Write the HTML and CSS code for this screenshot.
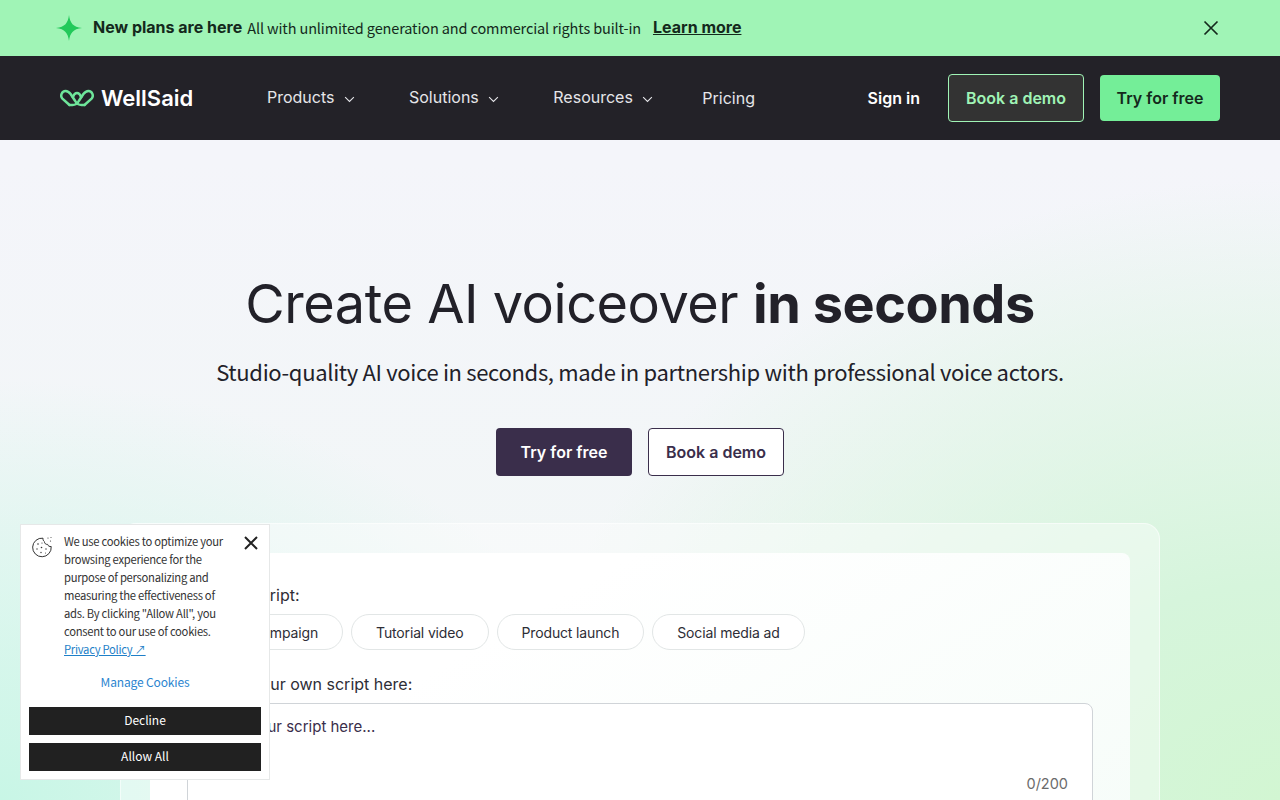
FILE: index.html
```html
<!DOCTYPE html>
<html lang="en">
<head>
    <meta charset="UTF-8">
    <meta name="viewport" content="width=device-width, initial-scale=1.0">
    <title>WellSaid</title>
    <link rel="stylesheet" href="styles.css">
</head>
<body>
    <div class="banner">
        <div class="banner-text">
            <svg class="spark" viewBox="0 0 26 26" width="26" height="26"><path d="M13 0 C14 8 17 12 26 13 C17 14 14 18 13 26 C12 18 9 14 0 13 C9 12 12 8 13 0 Z" fill="#22c95a"/></svg>
            <strong>New plans are here</strong>
            <span class="banner-sub">All with unlimited generation and commercial rights built-in</span>
            <a class="banner-link" href="#">Learn more</a>
        </div>
        <svg class="banner-close" viewBox="0 0 16 16" width="16" height="16"><path d="M1.5 1.5 L14.5 14.5 M14.5 1.5 L1.5 14.5" stroke="#14291c" stroke-width="1.7" fill="none"/></svg>
    </div>

    <nav class="nav">
        <a class="logo" href="#">
            <svg viewBox="0 0 34 18" width="34" height="18" fill="none" stroke="#6ee59a" stroke-width="2.5" stroke-linejoin="round" stroke-linecap="round">
                <path d="M9.5 16 L2.4 9.6 C0 7 1.6 2 5.6 2 C8 2 9.4 3.4 10.6 5 L15.2 12 C16.6 14.6 19 16 21.5 16 L24.5 16"/>
                <path d="M24.5 16 L31.6 9.6 C34 7 32.4 2 28.4 2 C26 2 24.6 3.4 23.4 5 L18.8 12 C17.4 14.6 15 16 12.5 16 L9.5 16"/>
                <path d="M12.8 8.2 C14 5 15.5 4 17 4 C18.5 4 20 5 21.2 8.2"/>
            </svg>
            <span>WellSaid</span>
        </a>
        <ul class="nav-links">
            <li class="has-menu">Products <svg class="chev" viewBox="0 0 12 8" width="11" height="7"><path d="M1 1.2 L6 6.2 L11 1.2" stroke="#e6e6ea" stroke-width="1.2" fill="none"/></svg></li>
            <li class="has-menu">Solutions <svg class="chev" viewBox="0 0 12 8" width="11" height="7"><path d="M1 1.2 L6 6.2 L11 1.2" stroke="#e6e6ea" stroke-width="1.2" fill="none"/></svg></li>
            <li class="has-menu">Resources <svg class="chev" viewBox="0 0 12 8" width="11" height="7"><path d="M1 1.2 L6 6.2 L11 1.2" stroke="#e6e6ea" stroke-width="1.2" fill="none"/></svg></li>
            <li class="pricing">Pricing</li>
        </ul>
        <div class="nav-actions">
            <a class="sign-in" href="#">Sign in</a>
            <a class="btn btn-outline-green" href="#">Book a demo</a>
            <a class="btn btn-green" href="#">Try for free</a>
        </div>
    </nav>

    <main class="hero">
        <h1>Create AI voiceover <b>in seconds</b></h1>
        <p class="lead">Studio-quality AI voice in seconds, made in partnership with professional voice actors.</p>
        <div class="hero-actions">
            <a class="btn btn-dark" href="#">Try for free</a>
            <a class="btn btn-white" href="#">Book a demo</a>
        </div>

        <section class="demo">
            <div class="demo-inner">
                <div class="demo-label">Select a script:</div>
                <div class="chips">
                    <span class="chip">Brand campaign</span>
                    <span class="chip">Tutorial video</span>
                    <span class="chip">Product launch</span>
                    <span class="chip">Social media ad</span>
                </div>
                <div class="demo-label second">Or write your own script here:</div>
                <div class="textarea">
                    <span class="placeholder">Type your script here...</span>
                    <span class="count">0/200</span>
                </div>
            </div>
        </section>
    </main>

    <aside class="cookie">
        <div class="cookie-top">
            <svg class="cookie-icon" viewBox="0 0 22 22" width="22" height="22" fill="none" stroke="#333" stroke-width="1">
                <path d="M12 2.2 A9.3 9.3 0 1 0 20.2 10.5 C18.6 10.8 17 10 16.6 8.4 C14.8 8.6 13.4 7.4 13.4 5.6 C12.4 5 11.8 3.6 12 2.2 Z"/>
                <g fill="#333" stroke="none">
                    <circle cx="7" cy="8" r=".8"/><circle cx="11" cy="7" r=".6"/><circle cx="6" cy="13" r=".7"/>
                    <circle cx="10.5" cy="11.5" r=".8"/><circle cx="15" cy="13" r=".7"/><circle cx="10" cy="16.5" r=".7"/><circle cx="14.5" cy="17" r=".5"/>
                    <circle cx="17" cy="2" r=".6"/><circle cx="20" cy="1.5" r=".5"/><circle cx="19.5" cy="5" r=".6"/>
                </g>
            </svg>
            <p class="cookie-text">We use cookies to optimize your browsing experience for the purpose of personalizing and measuring the effectiveness of ads. By clicking "Allow All", you consent to our use of cookies. <a href="#">Privacy Policy ↗</a></p>
            <svg class="cookie-close" viewBox="0 0 14 14" width="14" height="14"><path d="M1 1 L13 13 M13 1 L1 13" stroke="#222" stroke-width="2" fill="none"/></svg>
        </div>
        <a class="manage" href="#">Manage Cookies</a>
        <button class="cookie-btn" type="button">Decline</button>
        <button class="cookie-btn" type="button">Allow All</button>
    </aside>
</body>
</html>
```

FILE: styles.css
```css
html, body {
    height: 100%;
    margin: 0;
    overflow: hidden;
}

body {
    font-family: Inter, "Liberation Sans", sans-serif;
    color: #222129;
    background:
        radial-gradient(ellipse 620px 420px at 0% 100%, #c8f6e6 0%, rgba(200, 246, 230, 0) 100%),
        radial-gradient(ellipse 760px 620px at 100% 100%, #d2f6d2 0%, #d6f5dc 35%, rgba(214, 245, 220, 0) 100%),
        linear-gradient(180deg, #f4f5fa 20%, #f1f7f5 100%);
}

a {
    text-decoration: none;
    color: inherit;
}

.banner {
    height: 56px;
    background: #a0f4b6;
    display: flex;
    align-items: center;
    justify-content: space-between;
    padding: 0 61px 0 56px;
    color: #14291c;
}

.banner-text {
    display: flex;
    align-items: center;
    font-size: 16px;
    margin-top: -2px;
}

.spark {
    margin: 2px 11px 0 0;
}

.banner-text strong {
    font-weight: 700;
    margin-right: 5px;
}

.banner-sub {
    font-family: "Noto Sans CJK SC", "Noto Sans", sans-serif;
    font-size: 14.5px;
    letter-spacing: -0.13px;
    margin-right: 12px;
}

.banner-link {
    font-weight: 700;
    text-decoration: underline;
}

.nav {
    height: 84px;
    background: #232228;
    display: flex;
    align-items: center;
    padding: 0 60px;
}

.logo {
    display: flex;
    align-items: center;
    gap: 7px;
    color: #fff;
    font-size: 22px;
    font-weight: 600;
    width: 207px;
}

.nav-links {
    display: flex;
    align-items: center;
    list-style: none;
    margin: 0;
    padding: 0;
    gap: 54px;
    color: #e6e6ea;
    font-size: 16px;
    flex: 1;
}

.has-menu {
    margin-top: -2px;
}

.chev {
    margin-left: 5px;
}

.pricing {
    margin-left: -5px;
}

.nav-actions {
    display: flex;
    align-items: center;
    gap: 16px;
}

.sign-in {
    color: #fff;
    font-weight: 600;
    margin-right: 12px;
}

.btn {
    display: flex;
    align-items: center;
    justify-content: center;
    box-sizing: border-box;
    font-size: 16px;
    font-weight: 600;
    border-radius: 4px;
}

.btn-outline-green {
    width: 136px;
    height: 48px;
    background: #333333;
    border: 1px solid #a0f4b6;
    color: #a0f4b6;
}

.btn-green {
    width: 120px;
    height: 46px;
    background: #74ee98;
    color: #14291c;
}

.hero {
    display: flex;
    flex-direction: column;
    align-items: center;
    padding-top: 130px;
}

.hero h1 {
    margin: 0;
    font-size: 54px;
    line-height: 68px;
    font-weight: 400;
    letter-spacing: -0.45px;
    color: #222129;
}

.hero h1 b {
    font-weight: 700;
}

.lead {
    margin: 15px 0 0;
    font-family: "Noto Sans CJK SC", "Noto Sans", sans-serif;
    font-size: 22px;
    letter-spacing: -0.33px;
    line-height: 36px;
    color: #222129;
}

.hero-actions {
    display: flex;
    gap: 16px;
    margin-top: 39px;
}

.btn-dark {
    width: 136px;
    height: 48px;
    padding-bottom: 1px;
    background: #3a2e4b;
    color: #fff;
}

.btn-white {
    width: 136px;
    height: 48px;
    padding-bottom: 1px;
    background: #fff;
    border: 1px solid #3a2e4b;
    color: #3a2e4b;
}

.demo {
    margin-top: 47px;
    width: 1040px;
    height: 400px;
    box-sizing: border-box;
    padding: 29px 29px 0;
    background: rgba(255, 255, 255, 0.4);
    border: 1px solid rgba(255, 255, 255, 0.55);
    border-radius: 16px;
}

.demo-inner {
    background: linear-gradient(150deg, #fff 30%, #f5fcf8 100%);
    border-radius: 8px;
    padding: 30px 37px 0;
    height: 100%;
    box-sizing: border-box;
}

.demo-label {
    font-size: 16px;
    line-height: 24px;
    color: #2e2d36;
    margin-bottom: 7px;
}

.demo-label.second {
    margin-top: 22px;
}

.chips {
    display: flex;
    gap: 8px;
}

.chip {
    height: 36px;
    box-sizing: border-box;
    display: flex;
    align-items: center;
    padding: 0 24px;
    border: 1px solid #e2e6e6;
    border-radius: 18px;
    background: #fff;
    font-size: 14px;
    letter-spacing: -0.15px;
    color: #2e2d36;
}

.textarea {
    position: relative;
    height: 200px;
    background: #fff;
    border: 1px solid #d0d4d8;
    border-radius: 8px;
    padding: 12px 23px;
    font-size: 15px;
    line-height: 22px;
    color: #3a2e4b;
}

.count {
    position: absolute;
    top: 69px;
    right: 24px;
    font-size: 14.5px;
    color: #6b6b6b;
}

.cookie {
    position: fixed;
    left: 20px;
    top: 524px;
    width: 250px;
    height: 256px;
    box-sizing: border-box;
    padding: 8px;
    background: #fff;
    border: 1px solid #e6e8e8;
    font-family: "Noto Sans CJK SC", "Noto Sans", sans-serif;
}

.cookie-top {
    display: flex;
    align-items: flex-start;
}

.cookie-icon {
    flex: none;
    margin: 3px 0 0 2px;
}

.cookie-text {
    margin: -1px 0 0 11px;
    width: 168px;
    flex: none;
    font-size: 11.25px;
    letter-spacing: -0.28px;
    line-height: 18px;
    color: #333;
}

.cookie-text a {
    color: #1e7fc8;
    text-decoration: underline;
}

.cookie-close {
    flex: none;
    margin: 3px 0 0 12px;
}

.manage {
    display: block;
    text-align: center;
    margin: 15px 0 16px;
    font-size: 12px;
    letter-spacing: -0.15px;
    line-height: 18px;
    color: #2b85d0;
}

.cookie-btn {
    display: block;
    width: 100%;
    height: 28px;
    padding: 0 0 3px;
    border: none;
    background: #212121;
    color: #fff;
    font-family: inherit;
    font-size: 12px;
    margin-bottom: 8px;
}
```
